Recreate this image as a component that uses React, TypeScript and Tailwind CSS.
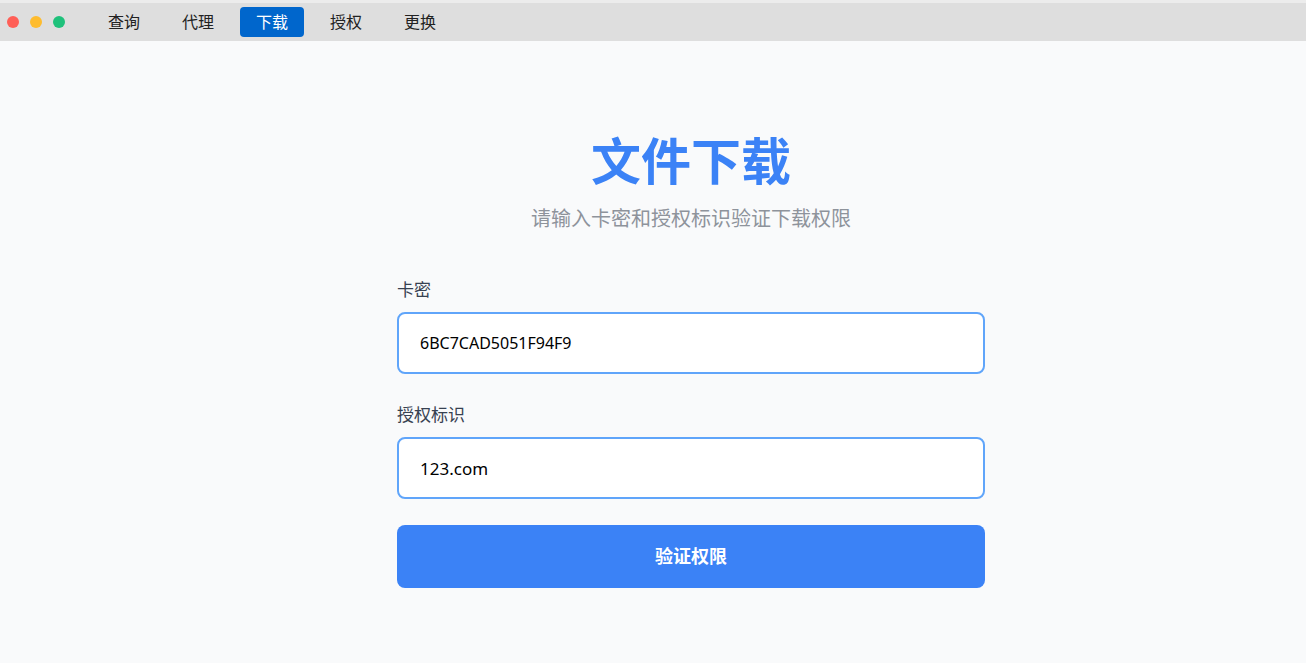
import { useState } from 'react';

const TABS = ['查询', '代理', '下载', '授权', '更换'];

export default function App() {
  const [key, setKey] = useState('6BC7CAD5051F94F9');
  const [domain, setDomain] = useState('123.com');

  return (
    <div
      className="min-h-[663px] bg-[#f9fafb]"
      style={{ fontFamily: '"Noto Sans", "Noto Sans CJK SC", sans-serif' }}
    >
      {/* title bar */}
      <div className="flex h-[41px] items-center border-t-[3px] border-[#ececec] bg-[#dedede] pl-[7px]">
        <div className="flex items-center gap-[11px]">
          <span className="h-3 w-3 rounded-full bg-[#ff5f57]" />
          <span className="h-3 w-3 rounded-full bg-[#febc2e]" />
          <span className="h-3 w-3 rounded-full bg-[#1fc17b]" />
        </div>
        <nav className="ml-[27px] flex items-center gap-[10px]">
          {TABS.map((t) => (
            <button
              key={t}
              className={`h-[30px] w-16 rounded text-[16px] ${
                t === '下载' ? 'bg-[#0066cc] text-white' : 'text-[#222]'
              }`}
            >
              {t}
            </button>
          ))}
        </nav>
      </div>

      <main className="flex flex-col items-center pl-[76px] pt-[90px]">
        <h1 className="text-[50px] font-bold leading-[60px] text-[#3b82f6]">文件下载</h1>
        <p className="mt-[14px] text-[20px] leading-[28px] text-[#8e939b]">
          请输入卡密和授权标识验证下载权限
        </p>

        <div className="mt-[45px] flex w-[588px] flex-col">
          <label className="text-[17px] leading-6 text-[#374151]">卡密</label>
          <input
            value={key}
            onChange={(e) => setKey(e.target.value)}
            className="mt-[10px] h-[62px] rounded-lg border-2 border-[#60a5fa] bg-white px-[21px] text-[16px] text-black outline-none"
          />

          <label className="mt-[29px] text-[17px] leading-6 text-[#374151]">授权标识</label>
          <input
            value={domain}
            onChange={(e) => setDomain(e.target.value)}
            className="mt-[10px] h-[62px] rounded-lg border-2 border-[#60a5fa] bg-white px-[21px] text-[17px] text-black outline-none"
          />

          <button className="mt-[26px] h-[63px] rounded-lg bg-[#3b82f6] text-[18px] font-bold text-white">
            验证权限
          </button>
        </div>
      </main>
    </div>
  );
}
